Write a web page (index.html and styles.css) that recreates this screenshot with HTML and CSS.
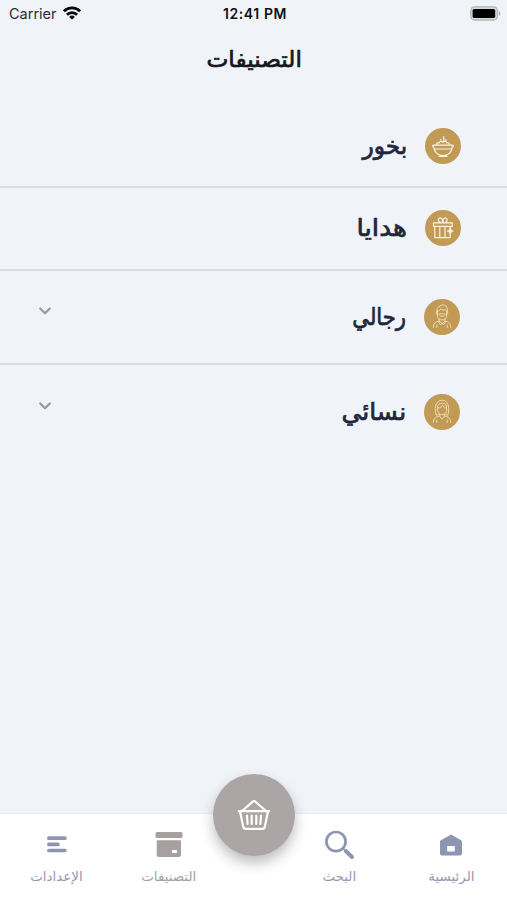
FILE: index.html
```html
<!DOCTYPE html>
<html lang="ar" dir="rtl">
<head>
<meta charset="utf-8">
<meta name="viewport" content="width=device-width, initial-scale=1">
<title>التصنيفات</title>
<link rel="stylesheet" href="styles.css">
</head>
<body>
<div class="screen">
  <div class="status" dir="ltr">
    <div class="carrier"><span>Carrier</span>
      <svg width="18" height="14" viewBox="0 0 18 14" fill="none" stroke="#0b0b0d" stroke-width="2.8"><path d="M.9 5.3a11.5 11.5 0 0 1 16.2 0M3.9 8.7a7.2 7.2 0 0 1 10.2 0"/><path d="M9 13.6 6.100 10.900a4.100 4.100 0 0 1 5.800 0Z" fill="#0b0b0d" stroke="none"/></svg>
    </div>
    <div class="time">12:41 PM</div>
    <svg class="battery" width="31" height="15" viewBox="0 0 31 15"><rect x=".8" y=".8" width="26.6" height="13.2" rx="3.8" fill="#d8dadd" stroke="#b4b6b9" stroke-width="1.3"/><rect x="2.6" y="2.9" width="22.6" height="9" rx="1.6" fill="#000"/><path d="M28.8 5v5c2-.8 2-4.2 0-5Z" fill="#a9abae"/></svg>
  </div>
  <h1 class="title"><span>التصنيفات</span></h1>
  <ul class="list">
    <li class="row">
      <span class="badge"><svg viewBox="0 0 36 36"><path d="M8.300 18.900q-1.400-.9 0-1.800h19.400q1.400.9 0 1.800M8.700 18.900c.5 4.800 3.800 8.700 9.300 8.700s8.800-3.900 9.300-8.700M9.800 21h16.400M14 28.400h8M11.500 16.600c0-2 1.700-2.400 2.700-1.600 0-1.800 2.800-2.100 3.800-.7 1-1.400 3.800-1.100 3.800.7 1-.8 2.700-.4 2.700 1.600M18.700 8.600c-1.600 1.500 1.700 2.200 0 4M15.900 11.300v1M20.900 11.300v1"/></svg></span>
      <span class="name name-a">بخور</span>
    </li>
    <li class="row">
      <span class="badge"><svg viewBox="0 0 36 36"><path d="M8.500 12.800h18.800v3.500H8.500ZM9.800 16.300v11.300h13.400M14.800 16.300v11.300M20 16.300v11.300M17.400 12.800c-6 0-4.400-6.700-.8-4.300 1.200.8 1 2.800.8 4.300ZM18.200 12.800c6 0 4.400-6.700.8-4.300-1.200.8-1 2.800-.8 4.300ZM25.200 16.300v2.500M25.200 24v3.600h-2"/><path fill="#fcf3e4" stroke-width=".6" d="m25.200 17.800 1 2.300 2.200 1-2.200 1-1 2.300-1-2.300-2.200-1 2.200-1Z"/></svg></span>
      <span class="name name-b">هدايا</span>
    </li>
    <li class="row row-tall">
      <span class="badge"><svg class="thin" viewBox="0 0 36 36"><path d="M13 13.200c-.8-4.500 2-6.200 5.200-7.200 4.500-.5 6 3.500 4.900 7.200M13 12.500c2.600-.2 3.200-1.700 3.400-2.800 1.200 1.500 4.100 1.200 5.700 1.400M13.400 12v4.800c0 5.500 9.200 5.500 9.200 0V12M13.400 15.600c1.400.6 1.700-1.200 4.600-.8 2.900-.4 3.200 1.400 4.600.8M15.900 17.100h4.200M12.900 12.600c-1.200.7-.8 3 .5 3M23.100 12.600c1.200.7.8 3-.5 3M15 20v2l3 2.700 3-2.700v-2M15 22c-4 1.100-5.700 2.300-5.700 6.400M21 22c4 1.100 5.700 2.300 5.700 6.400M12.800 26v2.500M23.200 26v2.500M14 22.400l2.400 3.200L18 24.700l1.600.9 2.400-3.200"/></svg></span>
      <span class="name name-c">رجالي</span>
      <svg class="chev" viewBox="0 0 14 10"><path d="m2.200 2.500 4.800 4.800 4.800-4.800"/></svg>
    </li>
    <li class="row row-tall">
      <span class="badge"><svg class="thin" viewBox="0 0 36 36"><path d="M12.200 20.800c-2-4-1.600-14.300 5.800-14.700 7.400.4 7.800 10.700 5.800 14.700M13.500 14.300c3.200-.4 4.500-1.800 5-3.100 1 1.800 2.200 2.500 4 3M13.500 13.500c-.8-5.800 9.800-5.800 9 0v3c-.6 5.600-8.400 5.600-9 0ZM12.200 20.800c1.200.5 2.300.2 2.800-.6M23.800 20.800c-1.200.5-2.300.2-2.800-.6M15.700 20.400v2l2.300 2.900 2.300-2.900v-2M15.700 22c-4.500 1-6.400 2.200-6.400 6.400M20.300 22c4.500 1 6.400 2.200 6.400 6.400M12.800 26v2.500M23.200 26v2.500"/></svg></span>
      <span class="name name-d">نسائي</span>
      <svg class="chev" viewBox="0 0 14 10"><path d="m2.200 2.500 4.800 4.800 4.800-4.800"/></svg>
    </li>
  </ul>
  <nav class="tabs">
    <div class="tab"><svg viewBox="0 0 30 30"><path fill="#8d95b0" fill-rule="evenodd" d="M15 4.500 4.900 10.200q-.9.6-.9 1.600v11.800q0 2 2 2h18q2 0 2-2V11.800q0-1-.9-1.600ZM11.200 16h7.600v5.500h-7.600Z"/></svg><span>الرئيسية</span></div>
    <div class="tab"><svg viewBox="0 0 30 30" fill="none" stroke="#8d95b0"><circle cx="11" cy="11.600" r="9.600" stroke-width="2.700"/><path d="m17.900 18.300 2 2" stroke-width="2"/><path d="m21 21.200 6 5.800" stroke-width="4" stroke-linecap="round"/></svg><span>البحث</span></div>
    <div class="cart-slot"><div class="cart"><svg viewBox="0 0 34 32"><path d="M1.800 12.200h30.400M3 12.200l3.200 15.600q.4 2 2.400 2h16.800q2 0 2.400-2L31 12.200M5 12 16.100 2.300q.9-.8 1.800 0L29 12M10 16.500l.6 8.500M14.700 16.500V25M19.300 16.500V25M24 16.500l-.6 8.500"/></svg></div></div>
    <div class="tab cats"><svg viewBox="0 0 30 30"><path fill="#a7a0a0" fill-rule="evenodd" d="M3 2h24q1.500 0 1.500 1.500v3q0 1.500-1.500 1.500H3Q1.500 8 1.500 6.500v-3Q1.500 2 3 2ZM2.700 10.300H27V25q0 2-2 2H4.700q-2 0-2-2ZM18 20v3h5v-3Z"/></svg><span>التصنيفات</span></div>
    <div class="tab"><svg viewBox="0 0 30 30" fill="none" stroke="#8d95b0" stroke-width="3.700" stroke-linecap="round"><path d="M6.900 8.200h16M6.900 14.400h9M6.900 20.500h16"/></svg><span>الإعدادات</span></div>
  </nav>
</div>
</body>
</html>
```
FILE: styles.css
```css
* { box-sizing: border-box; }
body { margin: 0; background: #f0f4f8; font-family: "DejaVu Sans", sans-serif; }
.screen { height: 900px; display: flex; flex-direction: column; overflow: hidden; }
.status { height: 28px; padding: 0 6px 0 9px; display: grid; grid-template-columns: 1fr auto 1fr; align-items: center; font: 14.500px/28px Inter, sans-serif; color: #2b2c2f; }
.carrier { display: flex; align-items: center; gap: 6px; }
.carrier svg { margin-bottom: 3px; }
.time { font-weight: 600; font-size: 14px; letter-spacing: .6px; color: #101012; }
.battery { justify-self: end; margin-bottom: 1px; }
.title { margin: 0; height: 78px; line-height: 63px; text-align: center; font-size: 22px; font-weight: 400; color: #17181c; -webkit-text-stroke: .7px #17181c; }
.title span, .name, .tab span { display: inline-block; white-space: nowrap; }
.title span { transform: translateX(1px) scaleX(1.055); }
.list { list-style: none; margin: 0; padding: 0; flex: 1; }
.row { height: 82.300px; padding: 0 46px 0 38px; display: flex; align-items: center; border-bottom: 2px solid #d9dce0; }
.row-tall { height: 94.800px; padding-right: 47px; }
.row:last-child { border-bottom-color: transparent; }
.badge { width: 36px; height: 36px; border-radius: 50%; background: #c19a55; flex: none; }
.badge svg { display: block; width: 36px; height: 36px; fill: none; stroke: #fcf3e4; stroke-width: 1.200; stroke-linejoin: round; stroke-linecap: round; }
.badge .thin { stroke-width: .9; stroke: #f3dfbc; }
.name { margin-right: 18px; font-size: 24px; font-weight: 400; line-height: 36px; color: #20263a; -webkit-text-stroke: .7px #20263a; transform-origin: right center; }
.name-a { transform: scaleX(.97); }
.name-b { transform: scaleX(1.1); }
.name-c { transform: scaleX(.88); }
.name-d { transform: scaleX(1.04); }
.chev { width: 14px; height: 10px; margin-right: auto; margin-bottom: 11px; fill: none; stroke: #9498a9; stroke-width: 2.200; stroke-linecap: round; stroke-linejoin: round; }
.tabs { height: 87px; background: #fff; border-top: 1px solid #eceef0; display: grid; grid-template-columns: 112px 111px 60px 111px 113px; }
.tab { padding-top: 16px; display: flex; flex-direction: column; align-items: center; color: #9299b1; }
.tab svg { width: 30px; height: 30px; }
.cats { color: #a7a0a0; }
.tab span { font-size: 13px; line-height: 20px; margin-top: 7px; transform: scaleX(1.03); }
.cart-slot { display: flex; justify-content: center; }
.cart { flex: none; width: 82px; height: 82px; margin-top: -40px; border-radius: 50%; background: #aba5a5; display: grid; place-items: center; box-shadow: 0 7px 13px rgba(40, 40, 40, .3); }
.cart svg { width: 34px; height: 32px; fill: none; stroke: #fff; stroke-width: 2.200; stroke-linecap: round; stroke-linejoin: round; }
```
